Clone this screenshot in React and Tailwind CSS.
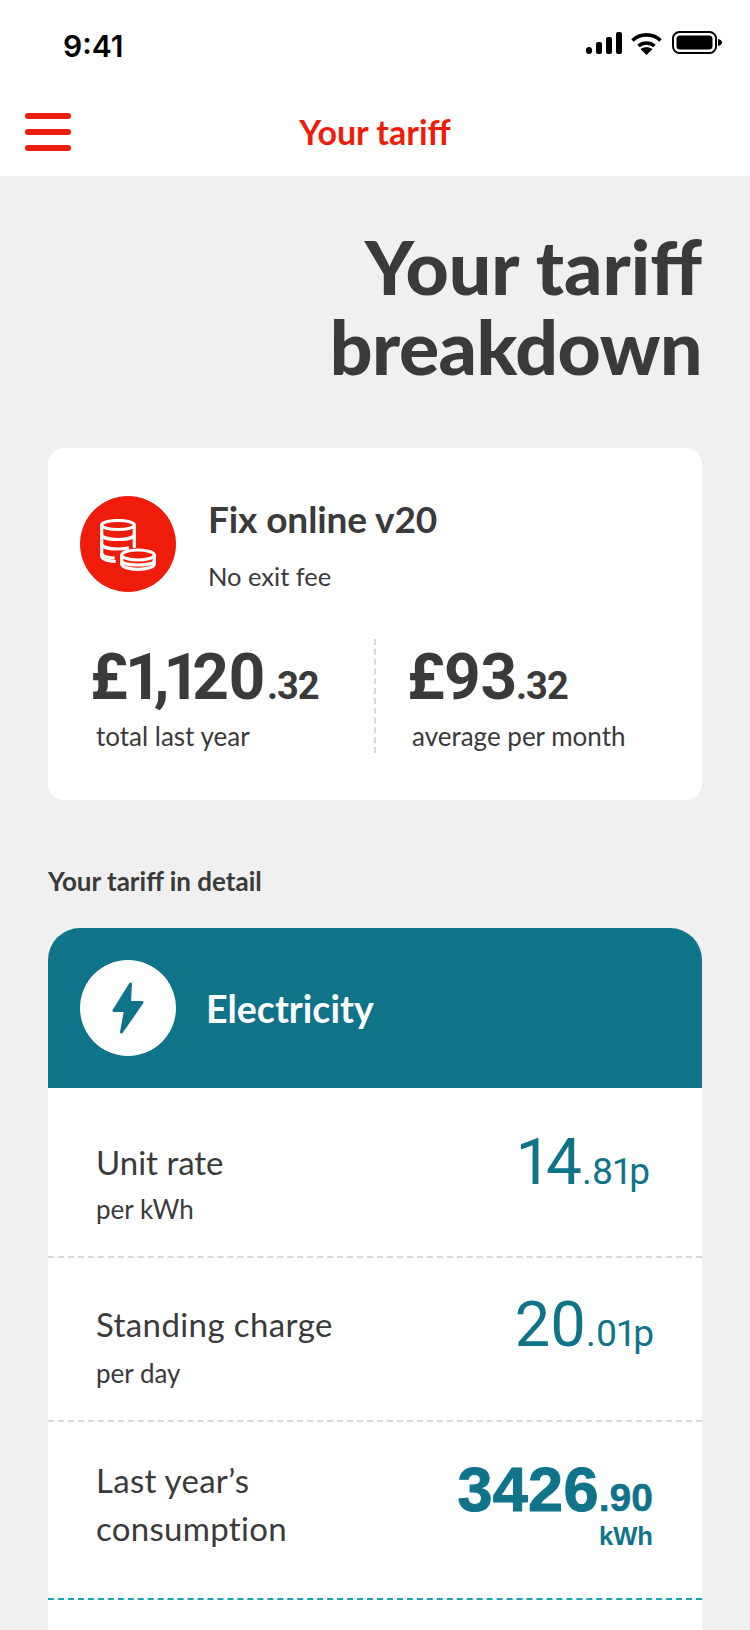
const Body = "font-['Lato',sans-serif]";
const Num = "font-['Roboto',sans-serif] proportional-nums";
const Heavy = "font-['Liberation_Sans',sans-serif] font-bold";

function Row({ children, className }) {
  return <div className={"flex justify-between pl-[48px] pr-[49px] " + className}>{children}</div>;
}

function Coins() {
  return (
    <svg width="56" height="52" viewBox="0 0 56 52" fill="none" stroke="#fff" strokeWidth="3.200" className="ml-[-1px] mt-[2px]">
      <ellipse cx="18" cy="6" rx="16.300" ry="4.500" />
      <path d="M1.700 6v31c0 3 6 5 14 5.500" />
      <path d="M34.300 6v23" />
      <path d="M1.700 15.500c0 3 7 5 16.300 5s16.300-2 16.300-5" />
      <path d="M1.700 25c0 3 7 5 16.300 5 4 0 8-.4 11-1.200" />
      <path d="M1.700 34c0 3 6 4.500 13 5" />
      <ellipse cx="38" cy="36" rx="16.300" ry="5" fill="#ee1c0a" />
      <path d="M21.700 36v9c0 3 7 5.300 16.300 5.300s16.300-2.300 16.300-5.300v-9" />
      <path d="M21.700 41.500c0 3 7 4.500 16.300 4.500s16.300-1.500 16.300-4.500" />
    </svg>
  );
}

export default function App() {
  return (
    <div className={"w-[750px] h-[1630px] overflow-hidden bg-[#f0f0f0] text-[#3a3a3a] " + Body}>
      <div className="bg-white h-[176px] flex flex-col">
        <div className="h-[88px] flex items-start justify-between pl-[63px] pr-[28px] pt-[28px]">
          <span className="font-['Inter',sans-serif] text-[30px] leading-[36px] font-semibold text-black">9:41</span>
          <div className="flex items-start gap-[9px] pt-[4px]">
            <svg width="36" height="22" viewBox="0 0 36 22" fill="#000">
              <rect x="0" y="15" width="6" height="7" rx="3" />
              <rect x="10" y="10" width="6" height="12" rx="2" />
              <rect x="20" y="5" width="6" height="17" rx="2" />
              <rect x="30" y="0" width="6" height="22" rx="2" />
            </svg>
            <svg width="31" height="23" viewBox="0 0 31 23" fill="none" stroke="#000" strokeWidth="3.600">
              <path d="M1.500 8.500C9 1 22 1 29.500 8.500" />
              <path d="M7.500 14c4.500-4 11.500-4 16 0" />
              <path d="M15.500 23l-6-6c3.500-2.500 8.500-2.500 12 0z" fill="#000" stroke="none" />
            </svg>
            <svg width="50" height="23" viewBox="0 0 50 23" className="ml-[1px] -mt-[1px]">
              <rect x="1" y="1" width="43" height="21" rx="6.500" fill="none" stroke="#000" strokeWidth="2" />
              <rect x="4.500" y="4.500" width="36" height="14" rx="3.500" fill="#000" />
              <path d="M46 8c2.500.5 4 1.500 4 3.500s-1.500 3-4 3.500z" fill="#000" />
            </svg>
          </div>
        </div>
        <div className="relative h-[88px] flex justify-center">
          <div className="absolute left-[25px] top-[25px] flex flex-col gap-[10px]">
            <div className="w-[46px] h-[6px] rounded-full bg-[#ee1c0a]" />
            <div className="w-[46px] h-[6px] rounded-full bg-[#ee1c0a]" />
            <div className="w-[46px] h-[6px] rounded-full bg-[#ee1c0a]" />
          </div>
          <span className="text-[34px] leading-[44px] font-bold text-[#ee1c0a] mt-[22px]">Your tariff</span>
        </div>
      </div>

      <div className="px-[48px]">
        <h1 className="pt-[50px] text-right text-[75px] leading-[80px] font-black">
          Your tariff<br /><span className="tracking-[-0.500px]">breakdown</span>
        </h1>

        <div className="mt-[62px] h-[352px] bg-white rounded-[16px] pt-[48px] px-[32px]">
          <div className="flex gap-[32px]">
            <div className="w-[96px] h-[96px] rounded-full bg-[#ee1c0a] flex items-center justify-center">
              <Coins />
            </div>
            <div>
              <div className="text-[37px] leading-[46px] font-bold tracking-[-0.1px]">Fix online v20</div>
              <div className="text-[25.500px] leading-[32px] mt-[18px]">No exit fee</div>
            </div>
          </div>
          <div className="flex mt-[47px] h-[114px]">
            <div className="w-[294px] pl-[10px]">
              <div className={Num + " font-bold text-[64px] leading-[72px] mt-[3px] tracking-[-1px]"}>
                £<span className="tracking-[-4px]">1,1</span>20<span className="text-[38px] ml-[2px]">.32</span>
              </div>
              <div className="text-[26px] leading-[32px] mt-[-2px] pl-[6px]">total last year</div>
            </div>
            <div className="border-l-2 border-dashed border-[#d8d8d8] pl-[31px]">
              <div className={Num + " font-bold text-[64px] leading-[72px] mt-[3px] tracking-[-1px]"}>
                £93<span className="text-[38px]">.32</span>
              </div>
              <div className="text-[26px] leading-[32px] mt-[-2px] pl-[5px]">average per month</div>
            </div>
          </div>
        </div>

        <div className="mt-[65px] text-[26px] leading-[32px] font-bold">Your tariff in detail</div>

        <div className="mt-[31px] rounded-t-[32px] overflow-hidden bg-white">
          <div className="h-[160px] bg-[#0f738a] flex items-center gap-[30px] px-[32px]">
            <div className="w-[96px] h-[96px] rounded-full bg-white flex items-center justify-center">
              <svg width="32" height="52" viewBox="0 0 32 52" fill="#0f738a" stroke="#0f738a" strokeWidth="3" strokeLinejoin="round">
                <path d="M18.500 2 L2 28.500 H13.500 L9.500 50 L30 20.500 H17.500 Z" />
              </svg>
            </div>
            <span className="text-white text-[37.500px] leading-[48px] font-bold pt-[2px]">Electricity</span>
          </div>

          <Row className="h-[170px] pt-[54px] border-b-2 border-dashed border-[#d8d8d8]">
            <div>
              <div className="text-[33px] leading-[40px]">Unit rate</div>
              <div className="text-[26px] leading-[32px] mt-[11px]">per kWh</div>
            </div>
            <div className={Num + " text-[#0f738a] text-[64px] leading-[72px] -mt-[15px] mr-[3px]"}>
              14<span className="text-[37px]">.81p</span>
            </div>
          </Row>
          <Row className="h-[164px] pt-[46px] border-b-2 border-dashed border-[#d8d8d8]">
            <div>
              <div className="text-[33px] leading-[40px] tracking-[0.4px]">Standing charge</div>
              <div className="text-[26px] leading-[32px] mt-[13px]">per day</div>
            </div>
            <div className={Num + " text-[#0f738a] text-[63px] leading-[72px] -mt-[15px] -mr-[1px] tracking-[-0.5px]"}>
              20<span className="text-[37px] tracking-normal">.01p</span>
            </div>
          </Row>
          <Row className="h-[178px] pt-[34px] border-b-2 border-dashed border-[#1ba3b5]">
            <div className="text-[33px] leading-[48px] tracking-[0.3px]">Last year’s<br />consumption</div>
            <div className={Heavy + " flex flex-col items-end text-[#0f738a]"}>
              <div className="text-[63px] leading-[72px] -mt-[3px] [-webkit-text-stroke:1px_#0f738a] tracking-[0.3px]">3426<span className="text-[39px] tracking-normal [-webkit-text-stroke:0.5px_#0f738a]">.90</span></div>
              <div className="text-[25.600px] leading-[28px] -mt-[12px]">kWh</div>
            </div>
          </Row>
          <div className="h-[120px]" />
        </div>
      </div>
    </div>
  );
}
